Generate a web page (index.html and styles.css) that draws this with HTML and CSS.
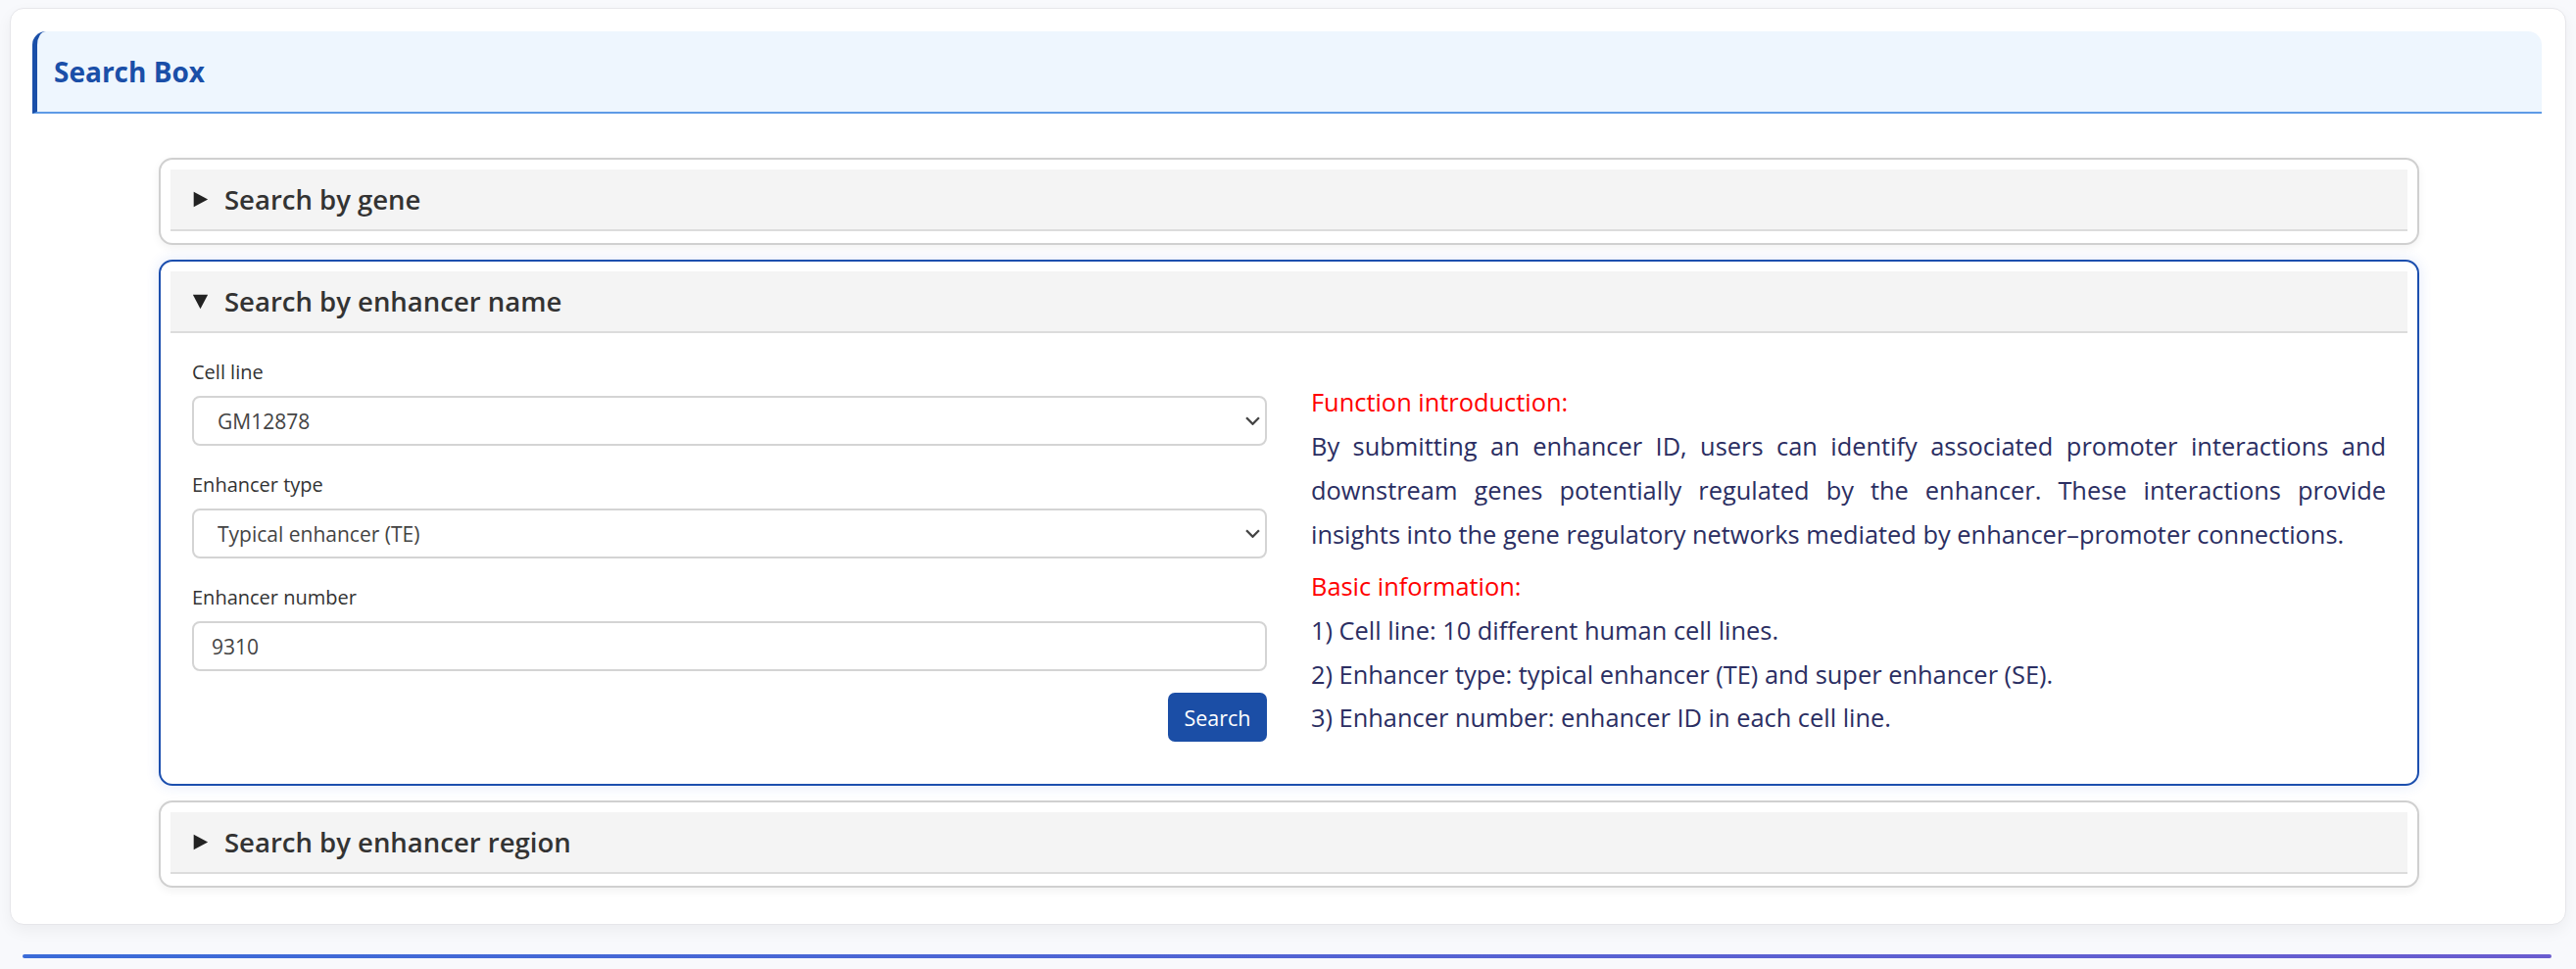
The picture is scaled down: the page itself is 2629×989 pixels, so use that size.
FILE: index.html
```html
<!DOCTYPE html>
<html lang="en">
<head>
    <meta charset="UTF-8">
    <meta name="viewport" content="width=device-width, initial-scale=1.0">
    <title>Enhancer Search</title>
    <link rel="stylesheet" href="styles.css">
</head>
<body>
    <div class="page">
        <div class="card">
            <div class="card-title">Search Box</div>

            <div class="accordion">
                <!-- 按基因搜索 -->
                <details class="acc-item">
                    <summary class="acc-head">
                        <svg class="arrow" viewBox="0 0 10 10"><polygon points="1,0.5 9.5,5 1,9.5"/></svg>
                        Search by gene
                    </summary>
                </details>

                <!-- 按增强子名称搜索 -->
                <details class="acc-item" open>
                    <summary class="acc-head">
                        <svg class="arrow" viewBox="0 0 10 10"><polygon points="1,0.5 9.5,5 1,9.5"/></svg>
                        Search by enhancer name
                    </summary>
                    <div class="acc-body">
                        <form class="search-form" onsubmit="return false;">
                            <label for="cellLine">Cell line</label>
                            <div class="select-wrap">
                                <select id="cellLine">
                                    <option>GM12878</option>
                                    <option>HepG2</option>
                                    <option>K562</option>
                                </select>
                                <svg class="chevron" viewBox="0 0 14 8"><path d="M1 1l6 6 6-6"/></svg>
                            </div>

                            <label for="enhType">Enhancer type</label>
                            <div class="select-wrap">
                                <select id="enhType">
                                    <option>Typical enhancer (TE)</option>
                                    <option>Super enhancer (SE)</option>
                                </select>
                                <svg class="chevron" viewBox="0 0 14 8"><path d="M1 1l6 6 6-6"/></svg>
                            </div>

                            <label for="enhNumber">Enhancer number</label>
                            <input type="text" id="enhNumber" value="9310">

                            <div class="form-actions">
                                <button type="submit">Search</button>
                            </div>
                        </form>

                        <div class="intro">
                            <p class="intro-title">Function introduction:</p>
                            <p class="intro-text">By submitting an enhancer ID, users can identify associated promoter interactions and downstream genes potentially regulated by the enhancer. These interactions provide insights into the gene regulatory networks mediated by enhancer–promoter connections.</p>
                            <p class="intro-title gap">Basic information:</p>
                            <p class="intro-line">1) Cell line: 10 different human cell lines.</p>
                            <p class="intro-line">2) Enhancer type: typical enhancer (TE) and super enhancer (SE).</p>
                            <p class="intro-line">3) Enhancer number: enhancer ID in each cell line.</p>
                        </div>
                    </div>
                </details>

                <!-- 按增强子区域搜索 -->
                <details class="acc-item">
                    <summary class="acc-head">
                        <svg class="arrow" viewBox="0 0 10 10"><polygon points="1,0.5 9.5,5 1,9.5"/></svg>
                        Search by enhancer region
                    </summary>
                </details>
            </div>
        </div>

        <div class="footer-line"></div>
    </div>
</body>
</html>
```

FILE: styles.css
```css
* {
    box-sizing: border-box;
    margin: 0;
    padding: 0;
}

body {
    font-family: 'Open Sans', 'Liberation Sans', sans-serif;
    background-color: #f8f9fc;
    color: #333;
}

.page {
    padding: 8px 10px 0;
}

/* 外层卡片 */
.card {
    background: white;
    border: 1px solid #e6e6ea;
    border-radius: 14px;
    box-shadow: 0 6px 16px rgba(0,0,0,0.05);
    padding: 23px 24px 37px 22px;
}

.card-title {
    background: #eef6fe;
    border-left: 5px solid #1a4fa8;
    border-bottom: 2px solid #5e9be6;
    border-radius: 14px 14px 0 0;
    height: 84px;
    line-height: 82px;
    padding-left: 17px;
    font-size: 28px;
    font-weight: 700;
    color: #1a4fa8;
}

/* 折叠面板 */
.accordion {
    margin: 45px 125px 0 129px;
    display: flex;
    flex-direction: column;
    gap: 15px;
}

.acc-item {
    border: 2px solid #d0d0d0;
    border-radius: 14px;
    padding: 10px 10px 12px;
    background: white;
    box-shadow: 0 3px 10px rgba(0,0,0,0.06);
}

.acc-item[open] {
    border-color: #1c4fae;
    box-shadow: 0 0 14px rgba(40,90,220,0.14);
}

.acc-head {
    list-style: none;
    display: flex;
    align-items: center;
    gap: 16px;
    height: 63px;
    padding-left: 22px;
    background: #f4f4f4;
    border-bottom: 2px solid #dcdcdc;
    font-size: 27.5px;
    font-weight: 600;
    color: #333;
    cursor: pointer;
}

.acc-head::-webkit-details-marker {
    display: none;
}

.arrow {
    width: 17px;
    height: 17px;
    fill: #222;
    flex-shrink: 0;
}

.acc-item[open] .arrow {
    transform: rotate(90deg);
}

.acc-body {
    display: grid;
    grid-template-columns: 1fr 1fr;
    gap: 45px;
    padding: 22px 22px 31px;
}

/* 表单 */
.search-form label {
    display: block;
    font-size: 20px;
    line-height: 35px;
    margin-bottom: 7px;
    color: #333;
}

.select-wrap {
    position: relative;
    margin-bottom: 22px;
}

select,
input[type="text"] {
    display: block;
    width: 100%;
    height: 51px;
    border: 2px solid #d4d4d4;
    border-radius: 8px;
    background: white;
    font-family: inherit;
    font-size: 21px;
    color: #444;
    outline: none;
}

select {
    appearance: none;
    padding: 0 40px 0 24px;
}

input[type="text"] {
    padding: 0 18px;
    margin-bottom: 22px;
}

.chevron {
    position: absolute;
    right: 7px;
    top: 21px;
    width: 15px;
    height: 9px;
    fill: none;
    stroke: #444;
    stroke-width: 2.2;
    pointer-events: none;
}

.form-actions {
    display: flex;
    justify-content: flex-end;
}

button {
    background: #1b4ea6;
    color: white;
    border: none;
    border-radius: 7px;
    height: 50px;
    width: 101px;
    font-family: inherit;
    font-size: 21.5px;
    cursor: pointer;
}

/* 功能介绍 */
.intro {
    padding-top: 26px;
    font-size: 25.4px;
    line-height: 45px;
    color: #2b2e62;
}

.intro-title {
    color: #ff0000;
}

.intro-title.gap {
    margin-top: 8px;
}

.intro-text {
    text-align: justify;
}

.intro-line {
    line-height: 44.5px;
}

.footer-line {
    height: 4px;
    margin: 30px 15px 0 13px;
    border-radius: 2px;
    background: linear-gradient(90deg, #3b6cd8, #6a5ccf);
}
```
